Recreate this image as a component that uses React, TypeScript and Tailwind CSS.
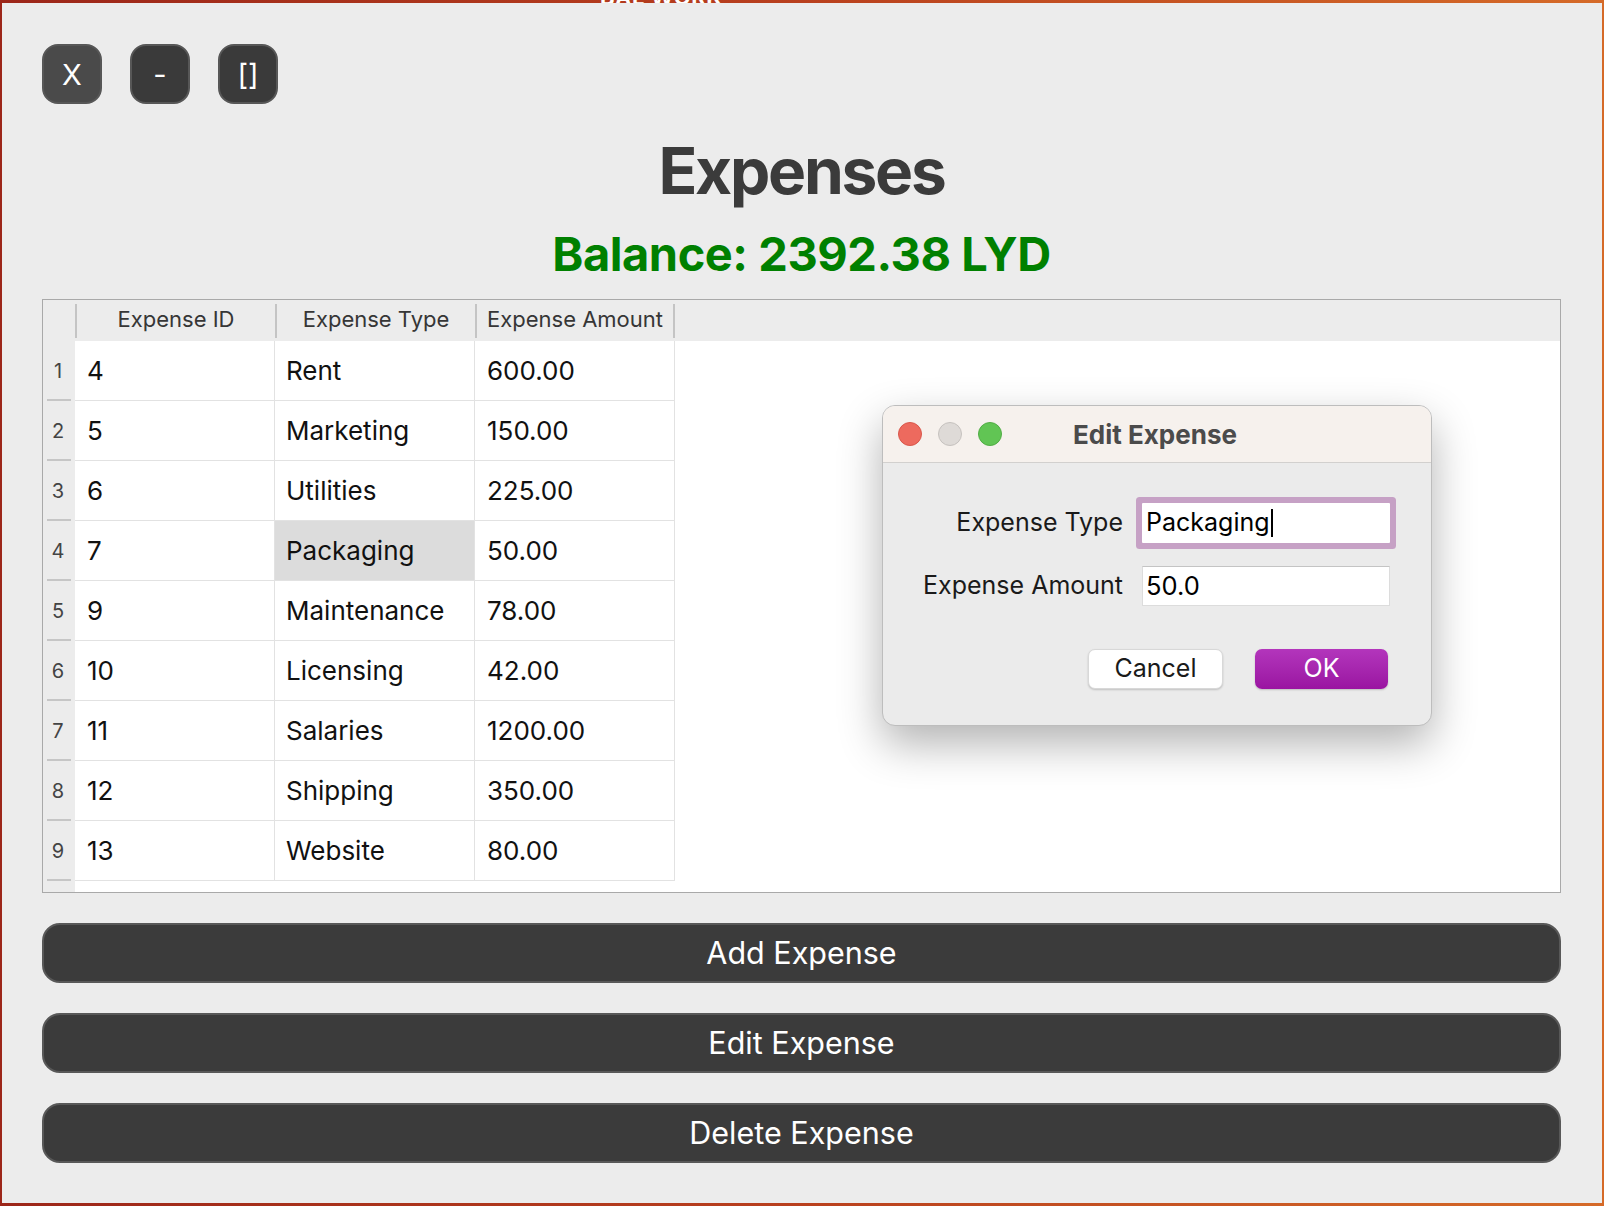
import { ReactNode } from 'react';
import clsx from 'clsx';

const expenses = [
  { id: 4, type: 'Rent', amount: '600.00' },
  { id: 5, type: 'Marketing', amount: '150.00' },
  { id: 6, type: 'Utilities', amount: '225.00' },
  { id: 7, type: 'Packaging', amount: '50.00' },
  { id: 9, type: 'Maintenance', amount: '78.00' },
  { id: 10, type: 'Licensing', amount: '42.00' },
  { id: 11, type: 'Salaries', amount: '1200.00' },
  { id: 12, type: 'Shipping', amount: '350.00' },
  { id: 13, type: 'Website', amount: '80.00' }
];

function ChromeButton({
  children,
  active = false
}: {
  children: ReactNode;
  active?: boolean;
}) {
  return (
    <button
      type="button"
      className={clsx(
        'flex h-[60px] w-[60px] items-center justify-center rounded-[16px] border-2 border-[#575757] text-[29px] leading-none text-white',
        active ? 'bg-[#4a4a4a]' : 'bg-[#3a3a3a]'
      )}
    >
      {children}
    </button>
  );
}

function ActionButton({ children }: { children: ReactNode }) {
  return (
    <button
      type="button"
      className="flex h-[60px] w-full items-center justify-center rounded-[18px] border-2 border-[#585858] bg-[#3b3b3b] text-[30.5px] text-white"
    >
      {children}
    </button>
  );
}

function HeaderCell({ label, last = false }: { label: string; last?: boolean }) {
  return (
    <div className="flex h-full w-[200px] items-center">
      <div className="h-[34px] w-[2px] bg-[#c4c4c4]" />
      <div className="flex-1 pb-[2px] text-center text-[22px] text-[#363636]">{label}</div>
      {last && <div className="h-[34px] w-[2px] bg-[#c4c4c4]" />}
    </div>
  );
}

function ExpenseTable() {
  return (
    <div className="mt-[22px] flex h-[594px] flex-col border border-[#a9a9a9] bg-white">
      {/* header */}
      <div className="flex h-[41px] bg-[#ececec]">
        <div className="w-[32px]" />
        <HeaderCell label="Expense ID" />
        <HeaderCell label="Expense Type" />
        <HeaderCell label="Expense Amount" last />
      </div>

      <div className="flex flex-1">
        {/* row numbers */}
        <div className="flex w-[32px] flex-col bg-[#ececec]">
          {expenses.map((_, i) => (
            <div key={i} className="flex h-[60px] flex-col">
              <div className="flex flex-1 items-center justify-center pt-[2px] pr-[2px] text-[20px] text-[#444]">
                {i + 1}
              </div>
              <div className="ml-[4px] h-[2px] w-[24px] bg-[#c6c6c6]" />
            </div>
          ))}
        </div>

        <div className="flex flex-col">
          {expenses.map((e) => (
            <div key={e.id} className="flex h-[60px] text-[26px] text-[#111]">
              <div className="flex w-[200px] items-center border-r border-b border-[#e2e2e2] pl-[12px]">
                {e.id}
              </div>
              <div
                className={clsx(
                  'flex w-[200px] items-center border-r border-b border-[#e2e2e2] pl-[11px]',
                  e.type === 'Packaging' && 'bg-[#dcdcdc]'
                )}
              >
                {e.type}
              </div>
              <div className="flex w-[200px] items-center border-r border-b border-[#e2e2e2] pl-[12px]">
                {e.amount}
              </div>
            </div>
          ))}
        </div>
      </div>
    </div>
  );
}

function EditDialog() {
  return (
    <div className="absolute top-[405px] left-[882px] flex h-[321px] w-[550px] flex-col overflow-hidden rounded-[13px] border border-[#bdbdbd] bg-[#ebebeb] shadow-[0_18px_44px_rgba(0,0,0,0.3)]">
      {/* title bar */}
      <div className="relative flex h-[57px] items-center justify-center border-b border-[#d2d0ce] bg-[#f6f1ed]">
        <div className="absolute top-[16px] left-[15px] flex gap-[16px]">
          <span className="h-[24px] w-[24px] rounded-full border border-[#d9574b] bg-[#ed6a5e]" />
          <span className="h-[24px] w-[24px] rounded-full border border-[#c6c2bf] bg-[#dedad7]" />
          <span className="h-[24px] w-[24px] rounded-full border border-[#51ad45] bg-[#61c554]" />
        </div>
        <span className="pr-[4px] text-[26px] font-bold text-[#4b4b4b]">Edit Expense</span>
      </div>

      <div className="flex flex-col pt-[40px] pr-[41px]">
        <div className="flex items-center justify-end gap-[19px]">
          <span className="text-[25px] text-[#1a1a1a]">Expense Type</span>
          <div className="flex h-[40px] w-[248px] items-center rounded-[1px] bg-white pl-[4px] text-[25px] text-black shadow-[0_0_0_6px_#c6a1c5]">
            Packaging
            <span className="ml-[1px] h-[28px] w-[2px] bg-black" />
          </div>
        </div>
        <div className="mt-[23px] flex items-center justify-end gap-[19px]">
          <span className="text-[25px] text-[#1a1a1a]">Expense Amount</span>
          <div className="flex h-[40px] w-[248px] items-center border border-[#dcdcdc] border-t-[#c4c4c4] bg-white pl-[3px] text-[25.5px] text-black">
            50.0
          </div>
        </div>

        <div className="mt-[43px] flex justify-end gap-[32px] pr-[2px]">
          <button
            type="button"
            className="h-[40px] w-[135px] rounded-[7px] border border-[#d8d8d8] bg-white text-[25px] text-[#1a1a1a] shadow-[0_1px_2px_rgba(0,0,0,0.18)]"
          >
            Cancel
          </button>
          <button
            type="button"
            className="h-[40px] w-[133px] rounded-[7px] bg-gradient-to-b from-[#b335bc] to-[#9a14a1] text-[25px] text-white shadow-[0_1px_2px_rgba(0,0,0,0.2)]"
          >
            OK
          </button>
        </div>
      </div>
    </div>
  );
}

export default function App() {
  return (
    <div className="relative h-[1206px] w-[1604px] overflow-hidden bg-gradient-to-r from-[#9c2619] via-[#b9401e] to-[#d56a28] px-[2px] py-[3px] font-['Inter','Liberation_Sans',sans-serif]">
      <span className="absolute top-[-19px] left-[600px] text-[22px] font-bold tracking-wide text-white">
        BAL WORK
      </span>

      <div className="relative flex h-[1200px] flex-col bg-[#ececec] pt-[41px] pr-[41px] pl-[40px]">
        <div className="flex gap-[28px]">
          <ChromeButton active>X</ChromeButton>
          <ChromeButton>-</ChromeButton>
          <ChromeButton>[]</ChromeButton>
        </div>

        <h1 className="mt-[35px] text-center text-[64px] leading-none font-bold tracking-[-0.035em] text-[#3b3b3b]">
          Expenses
        </h1>
        <h2 className="mt-[27px] h-[47px] text-center text-[47px] leading-none font-bold tracking-[-0.01em] text-[#008000]">
          Balance: 2392.38 LYD
        </h2>

        <ExpenseTable />

        <div className="mt-[30px] flex flex-col gap-[30px]">
          <ActionButton>Add Expense</ActionButton>
          <ActionButton>Edit Expense</ActionButton>
          <ActionButton>Delete Expense</ActionButton>
        </div>
      </div>

      <EditDialog />
    </div>
  );
}
